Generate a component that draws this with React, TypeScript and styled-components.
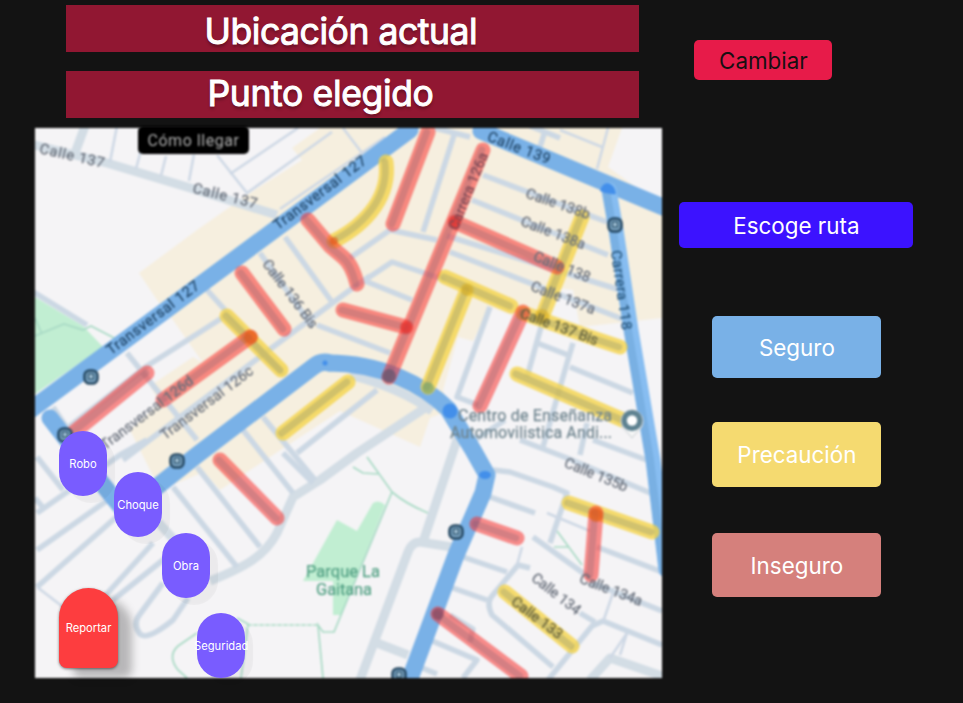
import React from "react";
import styled, { createGlobalStyle } from "styled-components";

const GlobalStyle = createGlobalStyle`
  html, body { margin: 0; background: #131313; }
  * { box-sizing: border-box; }
`;

const Page = styled.main`
  display: flex;
  width: 963px;
  height: 703px;
  overflow: hidden;
  padding-left: 35px;
  background: #131313;
  font-family: Inter, sans-serif;
`;

const MapColumn = styled.section`
  width: 627px;
  padding-top: 5px;
  display: flex;
  flex-direction: column;
  flex-shrink: 0;
`;

const Banner = styled.h1<{ $inset: number; $gap: number; $lift: number; $spacing: number }>`
  width: 573px;
  height: 47px;
  margin: 0 0 ${(p) => p.$gap}px 31px;
  padding: ${(p) => p.$lift}px 0 0 ${(p) => p.$inset}px;
  background: #911732;
  color: #fff;
  font-size: 35.5px;
  font-weight: 400;
  line-height: 44px;
  letter-spacing: ${(p) => p.$spacing}px;
  white-space: nowrap;
  -webkit-text-stroke: 1px #fff;
  text-shadow: 0 3px 3px rgba(0, 0, 0, 0.3);
`;

const MapFrame = styled.div`
  position: relative;
  width: 627px;
  height: 550px;
`;

const MapDrawing = styled.svg`
  display: block;
  width: 627px;
  height: 550px;
  filter: blur(1.15px);
  font-family: Roboto, sans-serif;
`;

const Directions = styled.button`
  position: absolute;
  left: 103px;
  top: -2px;
  width: 111px;
  height: 28px;
  padding: 0;
  border: 0;
  border-radius: 5px;
  background: #000;
  color: #b0b0b0;
  font: 400 16px/27px Roboto, sans-serif;
  letter-spacing: 0.55px;
  filter: blur(0.9px);
`;

const ReportOption = styled.button<{ $x: number; $y: number }>`
  position: absolute;
  left: ${(p) => p.$x}px;
  top: ${(p) => p.$y}px;
  display: flex;
  align-items: center;
  justify-content: center;
  width: 48px;
  height: 65px;
  padding: 0;
  border: 0;
  border-radius: 24px;
  background: #795cff;
  color: #fff;
  font: 400 11.2px Inter, sans-serif;
  white-space: nowrap;
  box-shadow: 8px 7px 1px rgba(0, 0, 0, 0.04);
`;

const ReportButton = styled(ReportOption)`
  width: 59px;
  height: 80px;
  border-radius: 30px 30px 8px 8px;
  background: #fd3d3f;
  box-shadow: 0 1px 3px rgba(0, 0, 0, 0.5), 14px 10px 9px rgba(0, 0, 0, 0.25);
`;

const Controls = styled.aside`
  display: flex;
  flex-direction: column;
  padding: 40.3px 0 0 17.4px;
`;

const ActionButton = styled.button<{
  $w: number; $h: number; $left: number; $gap: number; $bg: string; $color?: string;
}>`
  display: flex;
  align-items: center;
  justify-content: center;
  width: ${(p) => p.$w}px;
  height: ${(p) => p.$h}px;
  margin: 0 0 ${(p) => p.$gap}px ${(p) => p.$left}px;
  padding: 0;
  border: 0;
  border-radius: 5px;
  background: ${(p) => p.$bg};
  color: ${(p) => p.$color ?? "#fff"};
  font: 400 22.4px Inter, sans-serif;
  letter-spacing: 0;
`;

const wideRoads = [
  "M30 144L107 163L187 187L277 215", "M85 126L75 153",
  "M425 408L357 453L320 480L293 497L277 533C265 556 245 567 210 581",
  "M452 547L420 542Q412 542 408 552L360 680", "M377 643L408 655",
  "M590 680L610 658L662 676", "M158 522L177 543",
  "M462 425L423 542", "M350 375Q400 388 432 411",
];

const roads = [
  "M30 290L87 325",
  "M455 132L423 232", "M483 175L607 222", "M472 200L608 255", "M447 236L620 290", "M450 252L625 320",
  "M437 240L390 230L350 258", "M365 280L392 262L445 280", "M365 281L412 300", "M123 460L273 347L350 290L370 276",
  "M317 325L390 353", "M285 237L332 302", "M260 253L313 327", "M207 290L235 321L284 375", "M222 318L147 366L65 430",
  "M127 353L197 440", "M53 407L75 440", "M490 307L457 397L478 405", "M543 320L527 377", "M537 343L568 355",
  "M573 343L567 363L543 447", "M570 367L633 393", "M505 420L475 440", "M520 440L567 458L660 497",
  "M587 423L580 455", "M593 440L660 465", "M377 390L297 453", "M263 417L315 480", "M243 430L293 493",
  "M197 467L260 547", "M173 487L237 567", "M283 453L313 483",
  "M37 513L120 455L147 440", "M37 550L115 495", "M37 587L122 512", "M83 620L153 543", "M113 600L168 556",
  "M163 583L140 614Q132 624 140 634Q147 641 173 620L188 598", "M37 457L63 490", "M35 498L45 510",
  "M493 470L510 472L553 487L567 493L550 543", "M490 497L535 513", "M533 537L590 578", "M597 547L662 572",
  "M590 582L662 611", "M463 557L507 572", "M450 587L487 600", "M580 613L595 622",
  "M530 568L518 565L492 596Q486 603 492 615L553 667",
  "M548 680L592 626L603 621L662 645", "M430 640L477 660L463 678", "M450 615L473 629L470 642",
  "M410 663L437 674", "M530 126L560 138", "M545 131L540 147", "M435 128L470 137",
];

const thinRoads = [
  "M117 126L110 162", "M141 150L136 169", "M166 156L161 176", "M194 154L189 181",
  "M217 155L247 193L332 132", "M298 128L230 174", "M343 128L362 153", "M280 209L385 137",
  "M560 130L602 147", "M608 128L597 169", "M37 587L67 610", "M522 547L517 565",
  "M547 513L590 531", "M613 593L603 622", "M627 633L610 658M627 633L620 655",
];

const unsafe = [
  "M428 132L393 224", "M483 150L389 377", "M455 222L557 267", "M343 310L406 327",
  "M308 220L330 246L343 257Q352 264 357 284", "M242 273L284 329", "M250 337L163 400",
  "M147 373L73 433", "M523 312L480 406", "M220 460L277 518", "M477 524L517 538",
  "M596 513L591 575", "M438 614L521 676",
];

const caution = [
  "M386 162C390 194 370 222 334 241", "M227 316L281 370", "M348 382L283 433", "M445 277L511 306",
  "M467 290L428 387", "M582 217L542 317", "M523 313L593 338L620 347", "M517 374L623 420",
  "M569 503L652 532", "M505 592L572 646",
];

const safe = [
  "M25 414L273 231L410 130", "M481 131L670 210",
  "M50 418L67 440L125 512L197 455L313 367Q321 360 330 363",
  "M328 363C381 363 424 385 448 409L473 450L487 475L483 493L456 555L408 684",
];

type Label = [string, number, number, number, number, string?, number?];
const labels: Label[] = [
  ["Calle 137", 72, 156, 13, 66], ["Calle 137", 225, 196, 14, 66],
  ["Transversal 127", 153, 318, -37, 112, "#23486a"], ["Transversal 127", 320, 193, -37, 112, "#23486a"],
  ["Calle 139", 519, 148, 21, 66, "#23486a"], ["Carrera 126a", 468, 191, -68, 82, "#794855", 14],
  ["Calle 138b", 558, 204, 19, 67], ["Calle 138a", 553, 233, 21, 68], ["Calle 138", 562, 267, 22, 60],
  ["Calle 137a", 563, 298, 21, 68], ["Calle 137 Bis", 559, 327, 20, 82, "#64633f"],
  ["Carrera 118", 621, 290, 82, 80, "#28577e"], ["Calle 136 Bis", 290, 294, 53, 82],
  ["Transversal 126c", 207, 403, -37, 112], ["Transversal 126d", 147, 413, -37, 112],
  ["Calle 135b", 596, 475, 22, 67], ["Calle 134", 556, 594, 38, 58],
  ["Calle 134a", 611, 590, 21, 66], ["Calle 133", 537, 618, 37, 60, "#69643b"],
  ["Centro de Enseñanza", 535, 415, 0, 154, "#70858f", 16],
  ["Automovilistica Andi...", 531, 432, 0, 162, "#70858f", 16],
  ["Parque La", 343, 571, 0, 74, "#52a184", 16.5], ["Gaitana", 344, 589, 0, 56, "#52a184", 16.5],
];

const stops = [[91, 377], [177, 461], [615, 225], [456, 532], [399, 675], [65, 435]];

function Routes({ paths, tone, core }: { paths: string[]; tone: string; core: string }) {
  return (
    <g fill="none" strokeLinecap="round" strokeLinejoin="round">
      {paths.map((d) => <path key={d} d={d} stroke={tone} strokeWidth="15" />)}
      <g transform="translate(-1.2 0)">
        {paths.map((d) => <path key={d} d={d} stroke={core} strokeWidth="7" />)}
      </g>
    </g>
  );
}

function CityMap() {
  return (
    <MapDrawing viewBox="35 128 627 550" aria-label="Mapa de rutas">
      <rect x="35" y="128" width="627" height="550" fill="#f5f4f6" />
      <path fill="#f6efdf" d="M139 273L197 230L247 195L302 160L292 148L320 128H622L608 167L640 190L662 214V318L580 327L573 290L550 287L535 325L490 307L473 341L458 337L443 390L450 410L430 418L420 447L340 411L282 449L220 490L204 472L160 490L130 430L160 403L150 386L193 357L203 363L173 320L157 300Z" />
      <g fill="#c1eed2">
        <path d="M35 297L83 326L103 347L35 394Z" />
        <path d="M337 520L357 531L373 503Q379 499 385 505L341 615H333V581H303Z" />
      </g>
      <g fill="none" stroke="#a9dac5" strokeWidth="1.7">
        <path d="M35 336L64 324L83 330L91 326L118 340M35 318L42 334" />
        <path d="M353 467L363 473L378 474M367 457L392 492Q406 504 428 513M392 492L334 632H323L318 625L323 678" />
        <path d="M318 625H247" strokeDasharray="5 1" />
        <path d="M197 633L178 646Q167 656 178 670L187 678M237 618L248 624L241 678" />
        <path d="M557 531L582 565M554 547H568" />
      </g>
      <g fill="none" stroke="#d3dde5" strokeLinejoin="round" strokeWidth="9">
        {wideRoads.map((d) => <path key={d} d={d} />)}
      </g>
      <g fill="none" stroke="#ccd8e4" strokeLinejoin="round" strokeWidth="5.5">
        {roads.map((d) => <path key={d} d={d} />)}
      </g>
      <g fill="none" stroke="#ced8e5" strokeWidth="2.5">
        {thinRoads.map((d) => <path key={d} d={d} />)}
      </g>
      <g fill="none" stroke="#79b1e7" strokeWidth="17" strokeLinecap="round" strokeLinejoin="round">
        {safe.map((d) => <path key={d} d={d} />)}
        <path d="M609 190L616 230L631 330L653 460L666 570" stroke="#87bdf1" strokeWidth="15" />
        <path d="M606 190L613 230L628 330L650 460L663 570" stroke="#79b0e3" strokeWidth="8" />
      </g>
      <g fill="#438fea">
        <circle cx="450" cy="411" r="7.5" />
        <ellipse cx="485" cy="475" rx="6" ry="4" />
        <path d="M600 191Q602 183 608 183Q615 185 616 194Q608 195 600 191Z" />
        <circle cx="325" cy="363" r="2.5" />
      </g>
      <Routes paths={caution} tone="rgba(245,211,72,.78)" core="rgba(105,120,110,.25)" />
      <Routes paths={unsafe} tone="rgba(250,45,42,.53)" core="rgba(85,85,110,.21)" />
      <g fill="#ee2e28" opacity=".6">
        <circle cx="455" cy="222" r="6" /><circle cx="406" cy="327" r="6" />
      </g>
      <g fill="#e65d16" opacity=".6">
        <circle cx="251" cy="337" r="7" /><circle cx="596" cy="515" r="7" /><circle cx="334" cy="241" r="4" />
      </g>
      <g fill="#d5ac27" opacity=".6">
        <circle cx="467" cy="290" r="6" /><circle cx="542" cy="316" r="7" />
      </g>
      <circle cx="389" cy="376" r="7" fill="#61566f" opacity=".7" />
      <circle cx="438" cy="614" r="6" fill="#7d4055" opacity=".5" />
      <circle cx="428" cy="388" r="6" fill="#72a26a" opacity=".6" />
      <g textAnchor="middle" dominantBaseline="central" fontWeight="400" stroke="none">
        {labels.map(([text, x, y, angle, length, fill = "#676e7a", size = 14.5], i) => (
          <text key={i} transform={`translate(${x} ${y}) rotate(${angle})`} textLength={length}
            lengthAdjust="spacing" fontSize={size} fill={fill} stroke={fill} strokeWidth=".25">{text}</text>
        ))}
      </g>
      {stops.map(([x, y]) => (
        <g key={x} transform={`translate(${x} ${y})`}>
          <rect x="-6.5" y="-6.5" width="13" height="13" rx="5" fill="#7ea6c4" stroke="#274a64" strokeWidth="2.6" />
          <rect x="-2.5" y="-3" width="5" height="5" fill="#a8c6dc" stroke="#335970" strokeWidth="1.4" />
        </g>
      ))}
      <path d="M621 421A11 11 0 0 1 643 421Q643 428 637 432L632 438L627 432Q621 428 621 421Z" fill="#f5f6f6" stroke="#c9ced1" />
      <circle cx="632" cy="420.5" r="10.5" fill="#5e8291" />
      <circle cx="632" cy="420.5" r="5.2" fill="white" />
    </MapDrawing>
  );
}

export default function App() {
  return (
    <>
      <GlobalStyle />
      <Page>
        <MapColumn>
          <Banner $inset={138.5} $gap={19} $lift={5} $spacing={-0.45}>Ubicación actual</Banner>
          <Banner $inset={141.5} $gap={10} $lift={1} $spacing={-0.35}>Punto elegido</Banner>
          <MapFrame>
            <CityMap />
            <Directions>Cómo llegar</Directions>
            <ReportOption $x={24} $y={303}>Robo</ReportOption>
            <ReportOption $x={79} $y={344}>Choque</ReportOption>
            <ReportOption $x={127} $y={405}>Obra</ReportOption>
            <ReportOption $x={162.2} $y={485}>Seguridad</ReportOption>
            <ReportButton $x={24} $y={460}>Reportar</ReportButton>
          </MapFrame>
        </MapColumn>
        <Controls>
          <ActionButton $w={138} $h={40} $left={15} $gap={122} $bg="#e71b49" $color="#171012">Cambiar</ActionButton>
          <ActionButton $w={234} $h={45.5} $left={0} $gap={68.5} $bg="#3c12ff">Escoge ruta</ActionButton>
          <ActionButton $w={169} $h={61.5} $left={33} $gap={44} $bg="#79b1e7">Seguro</ActionButton>
          <ActionButton $w={169} $h={65.5} $left={33} $gap={45.5} $bg="#f5da70">Precaución</ActionButton>
          <ActionButton $w={169} $h={64.5} $left={33} $gap={0} $bg="#d5807c">Inseguro</ActionButton>
        </Controls>
      </Page>
    </>
  );
}
